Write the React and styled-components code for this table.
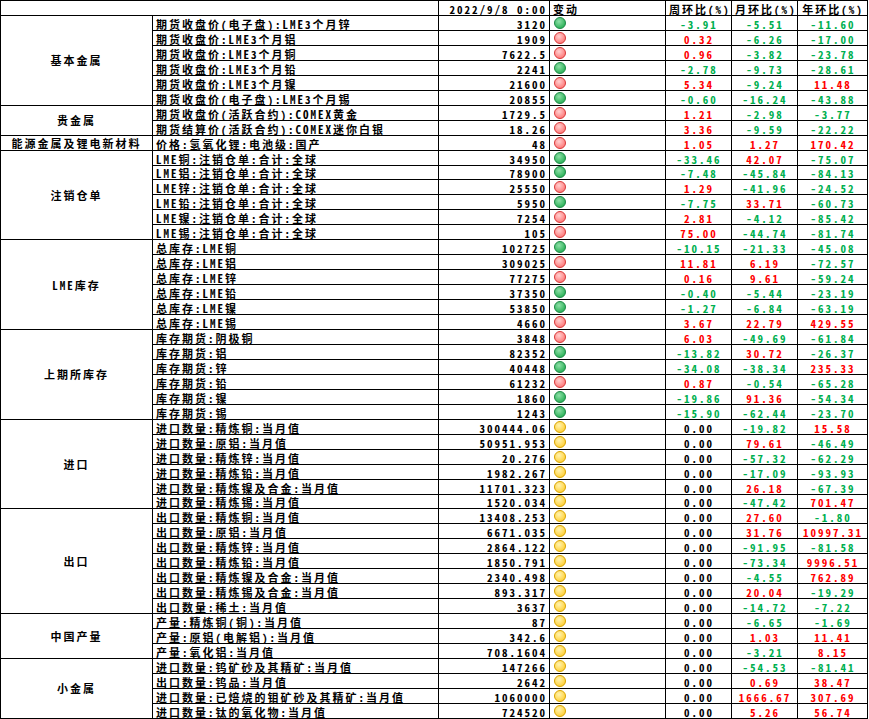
import React from 'react'
import styled, { createGlobalStyle } from 'styled-components'

const GlobalStyle = createGlobalStyle`
  html, body {
    margin: 0;
    padding: 0;
    background: #ffffff;
  }
`

const Sheet = styled.table`
  border-collapse: collapse;
  table-layout: fixed;
  width: 867px;
  font-family: "Noto Sans CJK SC", "Noto Sans CJK JP", sans-serif;
  font-feature-settings: "hwid";
  font-size: 11px;
  font-weight: 700;
  letter-spacing: 2px;
  line-height: 12px;
  color: #000;
`

const Row = styled.tr`
  height: ${p => p.h || 14.96}px;
`

const Cell = styled.td`
  border: 1px solid #000;
  padding: 0 2px 0 3px;
  line-height: 12px;
  white-space: nowrap;
  overflow: hidden;
  vertical-align: bottom;
  text-align: ${p => p.align || 'left'};
  color: ${p => p.tone || '#000'};
`

const GroupCell = styled.td`
  border: 1px solid #000;
  text-align: center;
  vertical-align: middle;
  white-space: nowrap;
  line-height: 12px;
  padding: 0 2px;
`

const Dot = styled.span`
  display: block;
  width: 10px;
  height: 10px;
  border-radius: 50%;
  margin: 0 0 1px 1px;
  border: 1px solid ${p => p.ring};
  background: radial-gradient(circle at 40% 35%, ${p => p.light} 0%, ${p => p.fill} 75%);
`

const dots = {
  g: { ring: '#1f8a47', light: '#8fe0a8', fill: '#2fb35b' },
  r: { ring: '#d83a3a', light: '#ffd0d0', fill: '#ff7d7d' },
  y: { ring: '#d9a400', light: '#fff3b0', fill: '#ffd23f' },
}

const groups = [
  ['基本金属', [
    ['期货收盘价(电子盘):LME3个月锌', '3120', 'g', '-3.91', '-5.51', '-11.60'],
    ['期货收盘价:LME3个月铝', '1909', 'r', '0.32', '-6.26', '-17.00'],
    ['期货收盘价:LME3个月铜', '7622.5', 'r', '0.96', '-3.82', '-23.78'],
    ['期货收盘价:LME3个月铅', '2241', 'g', '-2.78', '-9.73', '-28.61'],
    ['期货收盘价:LME3个月镍', '21600', 'r', '5.34', '-9.24', '11.48'],
    ['期货收盘价(电子盘):LME3个月锡', '20855', 'g', '-0.60', '-16.24', '-43.88'],
  ]],
  ['贵金属', [
    ['期货收盘价(活跃合约):COMEX黄金', '1729.5', 'r', '1.21', '-2.98', '-3.77'],
    ['期货结算价(活跃合约):COMEX迷你白银', '18.26', 'r', '3.36', '-9.59', '-22.22'],
  ]],
  ['能源金属及锂电新材料', [
    ['价格:氢氧化锂:电池级:国产', '48', 'r', '1.05', '1.27', '170.42'],
  ]],
  ['注销仓单', [
    ['LME铜:注销仓单:合计:全球', '34950', 'g', '-33.46', '42.07', '-75.07'],
    ['LME铝:注销仓单:合计:全球', '78900', 'g', '-7.48', '-45.84', '-84.13'],
    ['LME锌:注销仓单:合计:全球', '25550', 'r', '1.29', '-41.96', '-24.52'],
    ['LME铅:注销仓单:合计:全球', '5950', 'g', '-7.75', '33.71', '-60.73'],
    ['LME镍:注销仓单:合计:全球', '7254', 'r', '2.81', '-4.12', '-85.42'],
    ['LME锡:注销仓单:合计:全球', '105', 'r', '75.00', '-44.74', '-81.74'],
  ]],
  ['LME库存', [
    ['总库存:LME铜', '102725', 'g', '-10.15', '-21.33', '-45.08'],
    ['总库存:LME铝', '309025', 'r', '11.81', '6.19', '-72.57'],
    ['总库存:LME锌', '77275', 'r', '0.16', '9.61', '-59.24'],
    ['总库存:LME铅', '37350', 'g', '-0.40', '-5.44', '-23.19'],
    ['总库存:LME镍', '53850', 'g', '-1.27', '-6.84', '-63.19'],
    ['总库存:LME锡', '4660', 'r', '3.67', '22.79', '429.55'],
  ]],
  ['上期所库存', [
    ['库存期货:阴极铜', '3848', 'r', '6.03', '-49.69', '-61.84'],
    ['库存期货:铝', '82352', 'g', '-13.82', '30.72', '-26.37'],
    ['库存期货:锌', '40448', 'g', '-34.08', '-38.34', '235.33'],
    ['库存期货:铅', '61232', 'r', '0.87', '-0.54', '-65.28'],
    ['库存期货:镍', '1860', 'g', '-19.86', '91.36', '-54.34'],
    ['库存期货:锡', '1243', 'g', '-15.90', '-62.44', '-23.70'],
  ]],
  ['进口', [
    ['进口数量:精炼铜:当月值', '300444.06', 'y', '0.00', '-19.82', '15.58'],
    ['进口数量:原铝:当月值', '50951.953', 'y', '0.00', '79.61', '-46.49'],
    ['进口数量:精炼锌:当月值', '20.276', 'y', '0.00', '-57.32', '-62.29'],
    ['进口数量:精炼铅:当月值', '1982.267', 'y', '0.00', '-17.09', '-93.93'],
    ['进口数量:精炼镍及合金:当月值', '11701.323', 'y', '0.00', '26.18', '-67.39'],
    ['进口数量:精炼锡:当月值', '1520.034', 'y', '0.00', '-47.42', '701.47'],
  ]],
  ['出口', [
    ['出口数量:精炼铜:当月值', '13408.253', 'y', '0.00', '27.60', '-1.80'],
    ['出口数量:原铝:当月值', '6671.035', 'y', '0.00', '31.76', '10997.31'],
    ['出口数量:精炼锌:当月值', '2864.122', 'y', '0.00', '-91.95', '-81.58'],
    ['出口数量:精炼铅:当月值', '1850.791', 'y', '0.00', '-73.34', '9996.51'],
    ['出口数量:精炼镍及合金:当月值', '2340.498', 'y', '0.00', '-4.55', '762.89'],
    ['出口数量:精炼锡及合金:当月值', '893.317', 'y', '0.00', '20.04', '-19.29'],
    ['出口数量:稀土:当月值', '3637', 'y', '0.00', '-14.72', '-7.22'],
  ]],
  ['中国产量', [
    ['产量:精炼铜(铜):当月值', '87', 'y', '0.00', '-6.65', '-1.69'],
    ['产量:原铝(电解铝):当月值', '342.6', 'y', '0.00', '1.03', '11.41'],
    ['产量:氧化铝:当月值', '708.1604', 'y', '0.00', '-3.21', '8.15'],
  ]],
  ['小金属', [
    ['进口数量:钨矿砂及其精矿:当月值', '147266', 'y', '0.00', '-54.53', '-81.41'],
    ['出口数量:钨品:当月值', '2642', 'y', '0.00', '0.69', '38.47'],
    ['进口数量:已焙烧的钼矿砂及其精矿:当月值', '1060000', 'y', '0.00', '1666.67', '307.69'],
    ['进口数量:钛的氧化物:当月值', '724520', 'y', '0.00', '5.26', '56.74'],
  ]],
]

// negative values are green, positive red, zero black
const toneOf = v => {
  const n = parseFloat(v)
  if (n < 0) return '#00b050'
  if (n > 0) return '#ff0000'
  return '#000'
}

const widths = [152, 286, 111, 116, 66, 66, 70]

export default function App() {
  return (
    <>
      <GlobalStyle />
      <Sheet>
        <colgroup>
          {widths.map((w, i) => <col key={i} style={{ width: w }} />)}
        </colgroup>
        <tbody>
          <Row h={15}>
            <Cell colSpan={2} />
            <Cell align="right">2022/9/8 0:00</Cell>
            <Cell>变动</Cell>
            <Cell align="center">周环比(%)</Cell>
            <Cell align="center">月环比(%)</Cell>
            <Cell align="center">年环比(%)</Cell>
          </Row>
          {groups.map(([name, rows]) =>
            rows.map((r, i) => (
              <Row key={name + i}>
                {i === 0 && <GroupCell rowSpan={rows.length}>{name}</GroupCell>}
                <Cell>{r[0]}</Cell>
                <Cell align="right">{r[1]}</Cell>
                <Cell><Dot {...dots[r[2]]} /></Cell>
                <Cell align="center" tone={toneOf(r[3])}>{r[3]}</Cell>
                <Cell align="center" tone={toneOf(r[4])}>{r[4]}</Cell>
                <Cell align="center" tone={toneOf(r[5])}>{r[5]}</Cell>
              </Row>
            ))
          )}
        </tbody>
      </Sheet>
    </>
  )
}
